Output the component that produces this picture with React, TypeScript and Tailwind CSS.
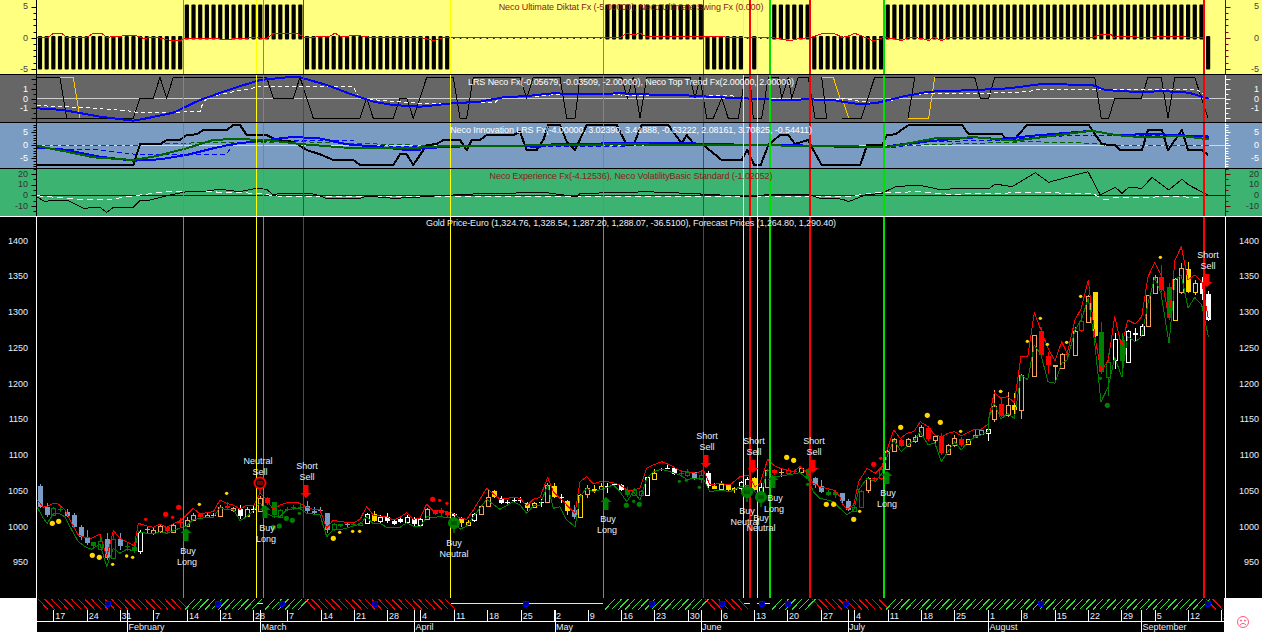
import type { ReactNode } from 'react';

type Pt = number[];
type Tick = { y: number; major: boolean };

// chart data was read off the picture in 3x crops, so every series keeps its crop offset
const P = (ox: number, oy: number, s: string): Pt[] =>
  s.trim().split(/\s+/).map((p) => {
    const [x, y] = p.split(',').map(Number);
    return [x / 3 + ox, y / 3 + oy];
  });
const line = (pts: Pt[]) => pts.map((p) => `${p[0].toFixed(1)},${p[1].toFixed(1)}`).join(' ');

const RED_LINE = [
  ...P(0, 420, '112,240 130,262 145,258 160,250 175,252 195,270 215,310 235,345 255,352 275,355 300,342 320,410 340,332 360,355 380,365 403,378 415,310 440,318 460,322 480,312 500,322 520,312 545,300 560,285 580,265 600,282 620,278 640,275 660,240 680,250 700,255 720,268 740,255 760,258 780,220 800,238 820,270 840,255 860,248 880,246 900,250 920,262 940,268 960,270 980,325 1000,300 1020,305 1060,308 1080,298 1100,260 1120,285 1140,288 1160,290 1180,300 1200,292 1220,278 1240,298'),
  ...P(420, 420, '0,295 20,252 40,272 60,270 100,280 120,295 140,298 160,270 200,205 240,238 280,232 300,235 320,258 340,238 360,232 383,172 400,215 420,235 440,255 465,280 480,185 500,170 520,192 545,183 580,188 600,195 620,210 640,210 660,205 680,145 700,135 725,125 750,135 780,152 800,155 830,160 850,150 870,195 900,190 930,195 960,170 985,165 1005,200 1020,190 1043,118 1060,135 1080,145 1100,150 1120,155 1140,140 1165,160 1180,190 1200,200 1240,210 1260,230'),
  ...P(842, 420, '0,250 15,268 35,255 50,185 75,145 100,160 120,140 135,90 155,30 175,55 195,40 215,35 235,5 258,20 278,45 298,50 318,40 338,35 358,48 378,38 398,28 418,28 438,12'),
  ...P(960, 220, '85,600 103,518 123,535 143,530 163,548 183,408 203,410 223,278 243,330 264,385 285,422 305,365 322,400 345,300 364,265 385,180 404,345 423,455 445,420 464,290 485,380 503,300 526,312 545,290 564,170 584,128 603,165 627,295 645,120 664,80 684,180 704,165 725,185 745,295'),
];

const GREEN_LINE = [
  ...P(0, 420, '112,262 130,295 142,310 160,282 175,280 195,290 215,330 235,365 255,380 275,388 300,372 320,440 340,385 360,400 380,388 403,392 415,335 440,340 460,342 480,335 500,340 520,332 545,322 560,318 580,298 600,296 620,292 640,292 660,262 680,270 700,268 720,302 740,290 760,272 780,248 800,280 820,290 840,290 860,270 880,266 900,265 920,280 940,282 960,285 980,350 1000,328 1020,330 1060,318 1080,312 1100,290 1120,312 1140,310 1160,322 1180,324 1200,322 1220,308 1240,318'),
  ...P(420, 420, '0,320 20,290 40,292 60,290 100,295 120,328 140,318 160,290 200,238 240,268 280,245 300,255 320,280 340,258 360,255 383,195 400,265 420,260 440,300 465,320 480,230 500,205 520,215 545,208 580,195 600,215 620,245 640,215 660,240 680,175 700,155 725,148 750,155 780,165 800,178 830,175 850,175 870,215 900,210 930,215 960,200 985,195 1005,215 1020,235 1043,148 1060,170 1080,168 1100,165 1120,162 1140,158 1165,178 1180,215 1200,235 1240,245 1260,265'),
  ...P(842, 420, '0,270 15,285 35,270 50,210 75,175 100,185 120,160 135,110 155,60 178,95 198,75 218,60 235,35 258,75 278,68 298,125 318,95 338,65 358,90 378,65 398,52 418,45 438,35'),
  ...P(960, 220, '85,600 103,550 123,597 143,580 163,595 183,465 203,480 223,375 243,405 264,485 285,490 305,430 322,420 345,330 364,300 385,235 404,370 423,545 445,500 464,412 485,470 503,350 526,365 545,350 564,250 584,172 603,220 627,370 645,180 664,165 684,265 704,232 725,255 745,350'),
];

const COLORS: Record<string, string> = {
  B: '#7b9cc4',
  G: '#008000',
  Y: '#ffd700',
  W: '#ffffff',
  O: '#f4a460',
  R: '#ff0000',
};

// x colour (f)illed|(h)ollow wickTop bodyTop bodyBottom wickBottom
const candleRows = (ox: number, oy: number, s: string) =>
  s.trim().split(';').filter(Boolean).map((row) => {
    const [x, c, kind, a, b, d, e] = row.trim().split(' ');
    return {
      x: +x / 3 + ox,
      color: COLORS[c],
      filled: kind === 'f',
      wt: +a / 3 + oy,
      bt: +b / 3 + oy,
      bb: +d / 3 + oy,
      wb: +e / 3 + oy,
    };
  });

const CANDLES = [
  ...candleRows(0, 420, `120 B f 192 198 260 265;142 B f 250 262 285 290;160 G h 262 265 285 288;180 G f 262 268 272 275;202 B f 268 275 288 290;222 B f 278 285 320 325;242 B f 315 322 352 360;261 B f 330 350 368 375;279 G f 365 366 378 385;300 G h 345 362 385 390;321 B f 340 358 416 420;340 G h 340 358 414 418;360 B f 340 358 378 390;382 G f 370 378 382 392;401 G f 375 382 393 400;421 W h 330 335 392 402;440 O f 318 328 331 342;459 O h 325 331 340 345;481 O h 315 319 334 338;501 R f 318 320 333 338;520 O h 312 314 334 337;540 R f 295 306 309 320;560 O h 290 300 317 320;580 O h 278 284 298 302;601 R f 280 282 292 296;620 O h 280 285 292 295;640 Y f 280 286 290 295;660 O h 255 262 290 292;680 R f 245 258 264 270;700 O h 260 264 270 275;720 W f 255 266 288 298;741 Y h 262 266 288 292;760 W f 258 268 271 278;781 O h 228 233 272 276;800 R f 232 234 248 255;822 G f 245 246 285 295;841 G h 268 270 290 295;862 G f 262 266 269 272;880 G f 255 262 265 270;901 G f 252 260 263 270;921 B f 243 258 272 280;942 B f 262 272 278 285;961 B f 262 270 273 280;981 B f 278 279 330 340;1002 G h 310 312 328 332;1021 G f 312 313 320 322;1042 B f 305 312 315 322;1060 G f 308 312 315 318;1080 G h 306 308 314 316;1102 W h 278 282 308 310;1122 Y f 272 282 302 305;1141 W h 285 290 303 308;1161 W f 280 292 305 310;1182 W f 296 302 312 316;1201 W f 295 298 306 310;1221 W h 285 290 305 310;1241 W f 290 296 312 318`),
  ...candleRows(420, 420, `1 W h 295 297 315 318;22 O h 265 268 298 300;44 R f 270 272 282 286;62 R f 265 273 280 290;82 R f 272 276 286 290;102 W f 278 282 288 300;123 Y f 292 295 310 322;143 Y h 300 305 315 318;161 W h 280 283 302 305;183 O h 255 258 283 286;203 O h 210 232 258 262;223 Y f 210 213 232 235;243 W f 228 233 248 252;262 W f 240 245 248 255;282 W f 232 240 243 250;301 W f 232 241 244 248;322 Y f 245 248 262 272;342 Y h 245 248 260 262;362 W f 238 247 250 260;382 O h 190 196 246 250;403 Y f 188 198 230 235;422 W f 222 232 235 248;442 Y f 240 243 273 285;462 B f 255 270 292 298;481 Y h 222 225 290 294;502 O h 195 205 222 235;522 Y f 195 207 214 218;542 Y h 190 198 208 210;562 W f 188 197 200 218;582 W f 188 192 195 198;602 W f 192 196 210 212;622 G f 200 210 226 232;642 G h 205 210 224 228;662 G h 210 214 225 230;682 W h 170 172 227 228;702 Y h 148 160 178 180;722 Y f 143 146 150 152;742 W f 132 143 146 148;763 W f 140 144 162 165;782 G f 150 158 161 170;802 G h 148 155 165 170;823 B f 155 157 178 180;843 G h 150 165 178 190;863 W f 152 158 198 205;883 Y f 190 197 206 208;904 Y h 182 193 208 212;925 Y f 192 193 210 212;943 Y h 200 203 206 220;962 W h 182 187 205 212;982 W h 172 177 200 212;1003 Y f 170 174 210 215;1022 W h 190 200 215 220;1042 O h 148 150 202 205;1063 R f 148 150 160 165;1083 O f 148 156 159 170;1103 R h 143 150 160 162;1122 R f 150 154 157 160;1142 O h 140 145 158 162;1165 G f 145 148 178 180;1184 B f 172 175 197 205;1204 B f 180 198 215 220;1224 G f 210 216 224 228;1244 G f 210 215 224 235`),
  ...candleRows(842, 420, `0 B f 218 220 245 250;18 B f 238 242 268 272;37 G h 255 260 272 275;57 G h 210 212 260 262;77 O h 172 175 212 218;97 R f 172 174 178 182;116 R h 145 148 176 180;136 O h 90 92 146 148;156 O h 55 58 95 97;178 R f 58 60 78 80;198 O h 55 58 78 80;218 O h 45 50 62 68;237 O h 15 22 50 52;259 R f 18 24 58 62;278 O h 45 48 60 75;298 R f 38 48 98 105;317 O h 72 76 102 105;336 O h 45 55 75 82;358 R f 52 56 74 80;378 Y h 58 58 72 75;398 B h 30 45 50 54;418 B h 28 30 42 46;438 W h 12 28 40 62`),
  ...candleRows(960, 220, `103 O h 510 558 598 605;123 R f 530 552 587 590;143 O h 515 555 584 590;162 Y f 520 556 570 590;183 O h 462 464 570 598;223 O h 345 346 470 472;243 R f 320 333 405 412;264 R f 395 408 435 462;285 O f 435 436 442 485;305 O h 400 403 444 446;322 R f 390 403 406 420;345 O h 320 332 404 408;364 R h 280 304 332 335;383 O h 225 228 307 310;404 Y f 215 216 348 350;423 G f 305 337 458 462;445 G h 400 425 470 528;464 W h 340 358 420 447;485 G f 340 360 422 470;503 W h 330 334 428 430;526 W f 325 340 345 365;545 W h 312 318 345 348;564 O h 225 226 318 320;584 O h 165 172 220 222;603 R f 135 172 210 215;627 G f 190 202 295 300;645 Y h 175 178 300 303;664 O h 130 145 218 222;684 Y f 125 148 218 220;704 Y h 180 190 216 225;725 W f 170 188 222 240;745 W f 214 222 300 302`),
];

const dots = (ox: number, oy: number, color: string, s: string) =>
  s.trim().split(/\s+/).map((p) => {
    const [x, y, r] = p.split(',').map(Number);
    return { x: x / 3 + ox, y: y / 3 + oy, r: r === 7 ? 2.6 : 1.7, color };
  });

const DOTS = [
  ...dots(0, 420, COLORS.Y, '157,310,7 176,304,7 277,406,7 298,412,7 338,433,4 380,408,4 398,412,4 598,253,4 680,220,4 1000,355,7 1019,337,4 1058,334,4 1079,334,4'),
  ...dots(0, 420, COLORS.R, '437,298,4 497,283,7 518,292,4 536,262,7'),
  ...dots(0, 420, COLORS.G, '820,322,7 838,318,7 859,295,7 877,301,7 898,280,4'),
  ...dots(420, 420, COLORS.R, '38,238,7 59,241,4 81,250,4'),
  ...dots(420, 420, COLORS.G, '619,256,7 641,244,4 658,253,7 778,184,4 799,181,4 838,202,4 1163,193,4'),
  ...dots(420, 420, COLORS.Y, '1100,112,7 1121,121,7 1219,253,7 1241,253,7'),
  ...dots(842, 420, COLORS.R, '95,133,7 116,115,4'),
  ...dots(842, 420, COLORS.Y, '35,298,7 53,274,4 176,22,7 295,7,7 356,34,4'),
  ...dots(880, 340, COLORS.Y, '142,226,7 362,154,4'),
  ...dots(960, 220, COLORS.Y, '122,514,4 202,364,4 241,295,4 262,373,4 320,367,4 362,229,4 601,112,4'),
  ...dots(960, 220, COLORS.G, '421,475,4 442,556,7'),
];

const MARKER_LINES = [
  { x: 183.5, c: '#00e000', w: 1 },
  { x: 256.5, c: '#ffff00', w: 1 },
  { x: 263.5, c: '#00e000', w: 1 },
  { x: 303.5, c: '#ff0000', w: 1 },
  { x: 450.5, c: '#ffff00', w: 1 },
  { x: 603.5, c: '#00e000', w: 1 },
  { x: 703.5, c: '#ff0000', w: 1 },
  { x: 743.5, c: '#ffff00', w: 1 },
  { x: 750, c: '#ff0000', w: 2 },
  { x: 757.5, c: '#ffff00', w: 1 },
  { x: 770, c: '#00e000', w: 2 },
  { x: 810, c: '#ff0000', w: 2 },
  { x: 884, c: '#00e000', w: 2 },
  { x: 1204, c: '#ff0000', w: 2 },
];

const SIGNAL_TEXT: [number, number, string][] = [
  [188, 551, 'Buy'], [187, 562, 'Long'],
  [258, 461, 'Neutral'], [260, 472, 'Sell'],
  [307, 466, 'Short'], [307, 477, 'Sell'],
  [267, 528, 'Buy'], [266, 539, 'Long'],
  [454, 543, 'Buy'], [454, 554, 'Neutral'],
  [608, 519, 'Buy'], [607, 530, 'Long'],
  [707, 436, 'Short'], [707, 447, 'Sell'],
  [754, 441, 'Short'], [754, 452, 'Sell'],
  [747, 511, 'Buy'], [745, 522, 'Neutral'],
  [761, 518, 'Buy'], [761, 528, 'Neutral'],
  [775, 498, 'Buy'], [774, 509, 'Long'],
  [814, 441, 'Short'], [814, 452, 'Sell'],
  [888, 493, 'Buy'], [887, 504, 'Long'],
  [1208, 255, 'Short'], [1208, 266, 'Sell'],
];

const UP_ARROWS: [number, number][] = [[186, 528], [265, 505], [606, 497], [773, 475], [887, 471]];
const DOWN_ARROWS: [number, number][] = [[306, 485], [706, 455], [753, 460], [813, 460], [1207, 274]];
const BUY_CIRCLES: [number, number][] = [[454, 523], [747, 492], [761, 497]];

const barState = (x: number) => {
  if (x < 183.5) return -1;
  if (x < 303) return 1;
  if (x < 450) return -1;
  if (x < 603.5) return 0;
  if (x < 703) return 1;
  if (x < 744) return -1;
  if (x > 749 && x < 756) return -1;
  if (x < 770) return 0;
  if (x < 810.5) return 1;
  if (x < 885) return -1;
  if (x < 1204) return 1;
  return -1;
};
const BAR_X = Array.from({ length: 176 }, (_, i) => 40 + 6.675 * i);

const HATCH: [number, number, string][] = [
  [37, 183, 'red'], [184, 256, 'green'], [257, 263, 'yellow'], [264, 303, 'green'],
  [304, 450, 'red'], [451, 603, 'yellow'], [604, 703, 'green'], [704, 743, 'red'],
  [744, 750, 'yellow'], [757, 770, 'yellow'], [771, 810, 'green'], [811, 884, 'red'],
  [885, 1204, 'green'], [1205, 1216, 'red'],
];
const BLUE_DOTS = [108, 218, 282, 375, 526, 652, 722, 762, 788, 846, 1041, 1208];

const DATES: [number, string][] = [
  [53.3, '17'], [86.7, '24'], [119.5, '31'], [153, '7'], [187, '14'], [220, '21'], [253, '28'],
  [287, '7'], [321, '14'], [354, '21'], [387, '28'], [420, '4'], [454, '11'], [487, '18'],
  [520.7, '25'], [554, '2'], [587.7, '9'], [621, '16'], [654, '23'], [687.7, '30'], [721, '6'],
  [754, '13'], [787, '20'], [821, '27'], [854, '4'], [887.7, '11'], [921, '18'], [954, '25'],
  [988, '1'], [1021, '8'], [1054.7, '15'], [1088, '22'], [1121, '29'], [1154.7, '5'], [1188, '12'],
  [1221, '19'],
];
const MONTHS: [number, string][] = [
  [127, 'February'], [260, 'March'], [414, 'April'], [554.5, 'May'], [700.5, 'June'],
  [847.5, 'July'], [988, 'August'], [1141, 'September'],
];

function makeTicks(zero: number, px: number, minor: number, major: number, min: number, max: number) {
  const out: Tick[] = [];
  for (let v = min; v <= max; v += minor) {
    out.push({ y: zero - v * px, major: v % major === 0 });
  }
  return out;
}

function Axis({ side, top, height, color, labelColor, ticks, labels }: {
  side: 'left' | 'right';
  top: number;
  height: number;
  color: string;
  labelColor: string;
  ticks: Tick[];
  labels: [string, number][];
}) {
  const left = side === 'left';
  const axisX = left ? 36.5 : 1225.5;
  const dir = left ? -1 : 1;
  return (
    <svg
      className="w-[37px] h-full shrink-0 block"
      viewBox={`${left ? 0 : 1225} ${top} 37 ${height}`}
    >
      <line x1={axisX} x2={axisX} y1={top} y2={top + height} stroke={color} />
      {ticks.map((t, i) => (
        <line
          key={i}
          x1={axisX}
          x2={axisX + dir * (t.major ? 5 : 3)}
          y1={Math.round(t.y) + 0.5}
          y2={Math.round(t.y) + 0.5}
          stroke={color}
        />
      ))}
      {labels.map(([text, y]) => (
        <text key={text} x={left ? 28 : 1259} y={y + 2.5} textAnchor="end" fill={labelColor}>
          {text}
        </text>
      ))}
    </svg>
  );
}

function MarkerLines({ top, height }: { top: number; height: number }) {
  return (
    <>
      {MARKER_LINES.map((m) => (
        <line key={m.x} x1={m.x} x2={m.x} y1={top} y2={top + height} stroke={m.c} strokeWidth={m.w} />
      ))}
    </>
  );
}

function Panel({ className, top, height, title, titleClass, axisColor, rightColor, labelColor, ticks, labels, children }: {
  className: string;
  top: number;
  height: number;
  title: string;
  titleClass: string;
  axisColor: string;
  rightColor: string;
  labelColor: string;
  ticks: Tick[];
  labels: [string, number][];
  children: ReactNode;
}) {
  return (
    <div className={`relative flex shrink-0 ${className}`}>
      <Axis side="left" top={top} height={height} color={axisColor} labelColor={labelColor} ticks={ticks} labels={labels} />
      <div className="relative w-[1188px] h-full">
        <svg className="block w-full h-full" viewBox={`37 ${top} 1188 ${height}`}>
          {children}
          <MarkerLines top={top} height={height} />
        </svg>
        <div className={`absolute left-0 right-0 top-0 text-center whitespace-nowrap leading-[14px] tracking-[-0.09px] ${titleClass}`}>{title}</div>
      </div>
      <Axis side="right" top={top} height={height} color={rightColor} labelColor={labelColor} ticks={ticks} labels={labels} />
    </div>
  );
}

const TOP_RED = [
  ...P(0, 0, '110,112 145,112 160,100 185,100 200,112 260,112 280,100 305,100 320,112 365,108 405,106 430,115 470,112 505,120 540,122 555,115 640,116 680,118 760,113 800,115 820,100 890,100 915,112 985,110 1005,100 1025,110 1070,106 1110,112 1260,112'),
  ...P(420, 0, '0,112 40,122 70,113 600,113 620,100 640,105 660,100 680,110 850,110 1060,113 1110,122 1140,115 1170,113 1210,100 1240,100 1260,108'),
  ...P(842, 0, '0,112 15,110 38,100 60,108 95,123 125,112 165,118 180,122 200,112 240,115 260,122 275,112 300,122 320,112 750,113 780,102 805,102 815,112 830,108 900,112 970,110 1090,112'),
];

const TREND = [
  ...P(0, 0, '110,232 180,232 200,355 400,355 420,295 460,295 480,232 500,295 520,232 800,232 820,295 880,295 900,232 940,355 1080,355 1100,295 1120,355 1180,355 1200,295 1220,295 1240,355 1260,295'),
  ...P(420, 0, '0,295 20,232 100,232 120,355 140,355 160,232 300,232 320,295 340,232 420,232 440,355 465,355 480,232 605,232 622,295 640,232 660,355 680,232 810,232 825,295 840,232 860,355 880,355 905,295 925,355 955,355 975,232 990,232 1000,355 1025,355 1045,232 1075,232 1085,295 1105,232 1115,295 1135,232 1165,232 1185,355 1220,355 1205,232 1215,232'),
];
const TREND_FLOOR = P(0, 0, '110,355 200,355');
const TREND_B = P(842, 0, '0,355 58,355 98,232 218,232 198,355');
const TREND_C = P(842, 0, '278,232 398,232 415,295 440,295 458,232 758,232 778,355 800,355 818,295 898,295 918,232 958,232 978,355 998,232 1058,232 1098,355');
const TREND_Y = [
  P(0, 0, '180,232 220,232 240,355'),
  P(420, 0, '1205,232 1240,232 1260,295'),
  P(842, 0, '0,295 20,355'),
  P(842, 0, '198,355 260,355 278,232'),
];
const LRS_BLUE = [
  ...P(0, 0, '110,325 190,330 300,350 400,362 440,355 520,338 600,300 700,265 780,240 860,232 900,232 980,255 1060,285 1120,305 1180,315 1260,320'),
  ...P(420, 0, '0,320 100,310 180,305 250,292 320,288 400,280 500,283 600,280 700,284 780,285 900,292 970,295 1080,300 1170,298 1260,302'),
  ...P(842, 0, '0,305 50,312 100,310 140,300 180,290 260,275 400,270 500,265 600,252 750,255 790,270 900,277 960,273 1040,278 1100,296'),
];
const LRS_WHITE = [
  ...P(0, 0, '110,315 140,318 240,322 380,332 420,338 600,335 610,305 630,290 700,275 770,262 790,258 1060,258 1075,290 1100,298 1200,305 1260,310'),
  ...P(420, 0, '0,310 225,308 240,292 360,288 440,280 600,285 940,288 960,295 1260,300'),
  ...P(842, 0, '0,295 60,305 120,308 160,298 190,288 260,280 430,280 560,275 580,268 760,268 790,270 1060,268 1075,275 1098,296'),
];

const INNO_BLACK = [
  ...P(0, 0, '110,495 400,495 420,433 480,433 500,420 540,420 560,405 590,403 610,390 680,390 700,375 720,375 740,405 800,405 830,420 880,425 920,450 960,463 1000,480 1060,480 1080,495 1180,495 1200,463 1220,463 1240,495 1260,465'),
  ...P(420, 0, '0,465 20,435 50,432 70,420 120,420 140,450 155,420 180,420 200,405 280,405 300,395 320,450 350,450 370,420 385,375 420,375 440,425 465,450 500,375 590,375 620,435 640,435 665,375 745,375 785,430 800,405 820,430 850,435 905,480 965,480 982,450 1003,495 1022,495 1045,435 1080,405 1105,405 1125,432 1165,420 1180,450 1205,495 1260,495'),
  ...P(842, 0, '0,495 55,495 75,435 120,435 135,405 160,403 200,375 360,375 380,403 480,403 490,415 520,415 555,375 740,375 780,433 820,435 835,450 900,450 918,390 960,390 978,450 1020,390 1038,450 1080,450 1098,465'),
];
const INNO_BLUE = [
  ...P(0, 0, '110,442 200,450 300,470 400,482 480,478 560,465 640,445 700,432 800,420 870,412 950,413 1040,433 1130,440 1220,450 1260,450'),
  ...P(420, 0, '0,445 100,440 200,437 360,440 400,432 600,430 800,430 900,432 1010,436 1130,436 1260,440'),
  ...P(842, 0, '0,442 130,440 200,430 300,420 400,412 480,418 560,408 660,400 750,392 820,405 940,402 1100,410'),
];
const INNO_GREEN = [
  ...P(0, 0, '110,438 200,455 280,472 400,480 470,468 560,445 640,420 700,417 800,420 900,432 1060,445 1260,445'),
  ...P(420, 0, '0,440 200,438 600,433 900,435 1260,438'),
  ...P(842, 0, '0,438 130,442 200,430 280,415 400,412 520,422 650,405 750,392 820,405 900,412 1020,408 1100,418'),
];
const INNO_BLUE_DASH = [
  ...P(0, 0, '110,445 300,450 400,462 680,463 700,430 870,420 1060,420 1075,436 1260,440'),
  ...P(420, 0, '0,440 1260,436'),
  ...P(842, 0, '0,440 160,442 260,425 500,420 600,410 750,405 1100,408'),
];
const INNO_GREEN_DASH = [
  ...P(0, 0, '110,438 400,436 500,430 900,425 1260,436'),
  ...P(420, 0, '0,436 1260,436'),
  ...P(842, 0, '0,438 100,440 300,433 560,425 760,430 790,436 1100,436'),
];

const EXP_BLACK = [
  ...P(0, 0, '110,590 135,605 160,600 200,600 250,625 300,622 320,637 340,622 400,622 420,602 450,600 500,587 560,575 620,573 660,568 720,575 770,565 800,568 820,585 840,580 930,580 960,587 980,597 1080,595 1100,588 1180,595 1260,592'),
  ...P(420, 0, '0,590 200,580 380,578 470,590 480,580 600,578 680,575 800,580 1000,590 1050,582 1170,585 1200,595 1260,597'),
  ...P(842, 0, '0,597 20,605 70,585 120,580 160,560 230,555 300,570 340,565 440,567 460,552 510,560 540,542 580,518 620,547 700,525 738,515 775,585 820,562 840,580 860,562 900,565 930,532 980,570 1020,538 1040,555 1098,585'),
];
const EXP_WHITE = [
  ...P(0, 0, '110,587 240,598 330,598 420,585 500,575 620,575 770,580 830,588 1000,590 1260,590'),
  ...P(420, 0, '0,588 1260,590'),
  ...P(842, 0, '0,592 100,578 240,575 320,583 540,578 750,580 790,600 820,592 900,592 980,590 1080,592'),
];

const Poly = ({ pts, color, width = 1, dash }: { pts: Pt[]; color: string; width?: number; dash?: string }) => (
  <polyline
    points={line(pts)}
    fill="none"
    stroke={color}
    strokeWidth={width}
    strokeDasharray={dash}
    strokeLinejoin="round"
    shapeRendering="crispEdges"
  />
);

function Candles() {
  return (
    <g shapeRendering="crispEdges">
      {CANDLES.map((c, i) => {
        const x = Math.round(c.x) + 0.5;
        return (
          <g key={i}>
            <line x1={x} x2={x} y1={c.wt} y2={c.wb} stroke={c.color} />
            {c.filled ? (
              <rect x={x - 2.5} y={Math.round(c.bt)} width={5} height={Math.max(Math.round(c.bb - c.bt), 1)} fill={c.color} />
            ) : (
              <rect x={x - 2} y={Math.round(c.bt) + 0.5} width={4} height={Math.max(Math.round(c.bb - c.bt), 1)} fill="#000000" stroke={c.color} />
            )}
          </g>
        );
      })}
    </g>
  );
}

function UpArrow({ x, y }: { x: number; y: number }) {
  return <polygon points={`${x},${y} ${x + 5.5},${y + 5} ${x + 2.5},${y + 5} ${x + 2.5},${y + 13} ${x - 2.5},${y + 13} ${x - 2.5},${y + 5} ${x - 5.5},${y + 5}`} fill="#008000" />;
}

function DownArrow({ x, y }: { x: number; y: number }) {
  return <polygon points={`${x - 2.5},${y} ${x + 2.5},${y} ${x + 2.5},${y + 8} ${x + 5.5},${y + 8} ${x},${y + 13} ${x - 5.5},${y + 8} ${x - 2.5},${y + 8}`} fill="#ff0000" />;
}

function NeutralMark({ x, y, color, ring }: { x: number; y: number; color: string; ring?: boolean }) {
  return (
    <g>
      <line x1={x} x2={x} y1={y} y2={y + 10} stroke={color} strokeWidth={1.5} />
      <circle cx={x} cy={y} r={5.5} fill={ring ? '#000000' : color} stroke={color} strokeWidth={ring ? 2 : 1} />
      <line x1={x - 3} x2={x + 3} y1={y - 1} y2={y - 1} stroke={ring ? color : '#003000'} />
      <line x1={x - 3} x2={x + 3} y1={y + 1} y2={y + 1} stroke={ring ? color : '#003000'} />
    </g>
  );
}

function PriceChart() {
  return (
    <svg className="block w-full h-full" viewBox="37 217 1188 381">
      <Candles />
      <Poly pts={RED_LINE} color="#ff0000" />
      <Poly pts={GREEN_LINE} color="#008000" />
      {DOTS.map((d, i) => (
        <circle key={i} cx={d.x} cy={d.y} r={d.r} fill={d.color} />
      ))}
      <MarkerLines top={217} height={381} />
      {UP_ARROWS.map(([x, y]) => <UpArrow key={x} x={x} y={y} />)}
      {DOWN_ARROWS.map(([x, y]) => <DownArrow key={x} x={x} y={y} />)}
      {BUY_CIRCLES.map(([x, y]) => <NeutralMark key={x} x={x} y={y} color="#008000" />)}
      <NeutralMark x={260} y={483} color="#ff0000" ring />
      {SIGNAL_TEXT.map(([x, y, t], i) => (
        <text key={i} x={x} y={y + 2.5} textAnchor="middle" fill="#e8f0ff">{t}</text>
      ))}
    </svg>
  );
}

function HatchStrip() {
  return (
    <svg className="block w-full h-[12px] shrink-0" viewBox="37 598 1187 12" shapeRendering="crispEdges">
      {HATCH.map(([from, to, kind]) => {
        if (kind === 'yellow') {
          return <line key={from} x1={from} x2={to} y1={603.5} y2={603.5} stroke="#ffff00" />;
        }
        const marks = [];
        for (let x = from; x < to - 3; x += 6.675) {
          marks.push(
            kind === 'red'
              ? <line key={x} x1={x + 1} x2={x + 11} y1={599} y2={609.5} stroke="#ff0000" />
              : <line key={x} x1={x + 1} x2={x + 11} y1={609.5} y2={599} stroke="#33e033" />,
          );
        }
        return <g key={from}>{marks}</g>;
      })}
      {BLUE_DOTS.map((x) => (
        <circle key={x} cx={x} cy={603.7} r={2.6} fill="#000080" stroke="#0000ff" strokeWidth={1.2} />
      ))}
    </svg>
  );
}

function TimeAxis() {
  return (
    <svg className="block w-full h-[22px] shrink-0" viewBox="37 610 1187 22">
      <line x1={37} x2={1224} y1={621.5} y2={621.5} stroke="#ffffff" />
      {DATES.map(([x, t]) => (
        <g key={x}>
          <line x1={Math.round(x) + 0.5} x2={Math.round(x) + 0.5} y1={610} y2={621} stroke="#ffffff" />
          <text x={x + 2} y={618.5} fill="#e8f0ff">{t}</text>
        </g>
      ))}
      {MONTHS.map(([x, t]) => (
        <g key={t}>
          <line x1={Math.round(x) + 0.5} x2={Math.round(x) + 0.5} y1={610} y2={632} stroke="#ffffff" />
          <text x={x + 1.5} y={630} fill="#e8f0ff">{t}</text>
        </g>
      ))}
    </svg>
  );
}

function FrownIcon() {
  return (
    <svg width="14" height="14" viewBox="0 0 14 14" fill="none" stroke="#ff5a78" strokeWidth="1">
      <circle cx="7" cy="7" r="5.5" />
      <circle cx="5" cy="5.5" r="0.6" fill="#ff5a78" />
      <circle cx="9" cy="5.5" r="0.6" fill="#ff5a78" />
      <path d="M4 10 Q7 6.8 10 10" />
    </svg>
  );
}

export default function App() {
  const mainTicks = makeTicks(527, 0.715, 10, 50, 900, 1430);
  const mainLabels: [string, number][] = [1400, 1350, 1300, 1250, 1200, 1150, 1100, 1050, 1000, 950].map((v) => [
    String(v),
    527 - (v - 1000) * 0.715,
  ]);

  return (
    <div className="w-[1262px] h-[632px] overflow-hidden flex flex-col bg-black text-[9px] font-['Liberation_Sans',sans-serif]">
      <Panel
        className="h-[75px] bg-[#ffff80] border-b border-black"
        top={0}
        height={74}
        title="Neco Ultimate Diktat Fx (-5.00000), Neco Ultimate Swing Fx (0.000)"
        titleClass="text-[#8b1a1a]"
        axisColor="#000000"
        rightColor="#800000"
        labelColor="#444444"
        ticks={makeTicks(37.7, 6.2, 1, 5, -5, 5)}
        labels={[['5', 6.7], ['0', 38], ['-5', 69]]}
      >
        {BAR_X.map((x) => {
          const s = barState(x);
          if (s === 1) return <rect key={x} x={x - 2.1} y={4.5} width={4.2} height={35} rx={1} fill="#000000" />;
          if (s === -1) return <rect key={x} x={x - 2.1} y={36} width={4.2} height={33.5} rx={1} fill="#000000" />;
          return <circle key={x} cx={x} cy={38} r={1} fill="#000000" />;
        })}
        <Poly pts={TOP_RED} color="#ff0000" />
      </Panel>
      <Panel
        className="h-[48px] bg-[#666666] border-b border-black"
        top={75}
        height={47}
        title="LRS Neco Fx(-0.05679, -0.03509, -2.00000), Neco Top Trend Fx(2.00000, 2.00000)"
        titleClass="text-white"
        axisColor="#000000"
        rightColor="#ffffff"
        labelColor="#ffffff"
        ticks={makeTicks(98.5, 9.8, 0.5, 1, -2, 2)}
        labels={[['1', 89], ['0', 99], ['-1', 108.5]]}
      >
        <line x1={37} x2={1225} y1={98.5} y2={98.5} stroke="#cfcfcf" />
        <Poly pts={TREND_FLOOR} color="#000000" />
        <Poly pts={TREND} color="#000000" />
        <Poly pts={TREND_B} color="#000000" />
        <Poly pts={TREND_C} color="#000000" />
        {TREND_Y.map((pts, i) => <Poly key={i} pts={pts} color="#ffc800" />)}
        <Poly pts={LRS_WHITE} color="#ffffff" dash="4 3" />
        <Poly pts={LRS_BLUE} color="#0000ff" width={2} />
      </Panel>
      <Panel
        className="h-[46px] bg-[#7b9cc2] border-b border-black"
        top={123}
        height={45}
        title="Neco Innovation LRS Fx(-4.00000, 3.02390, 3.41888, -0.63222, 2.08161, 3.70825, -0.54411)"
        titleClass="text-white"
        axisColor="#000000"
        rightColor="#ffffff"
        labelColor="#ffffff"
        ticks={makeTicks(145.3, 2.6, 1, 5, -8, 8)}
        labels={[['5', 132], ['0', 145], ['-5', 158]]}
      >
        <line x1={37} x2={1225} y1={145.5} y2={145.5} stroke="#d8d8d8" />
        <Poly pts={INNO_BLUE_DASH} color="#0000ff" dash="5 3" />
        <Poly pts={INNO_GREEN_DASH} color="#006400" dash="5 3" />
        <Poly pts={INNO_BLACK} color="#000000" width={2} />
        <Poly pts={INNO_BLUE} color="#0000ff" width={2} />
        <Poly pts={INNO_GREEN} color="#006400" width={2} />
      </Panel>
      <Panel
        className="h-[48px] bg-[#3cb371] border-b border-white"
        top={169}
        height={47}
        title="Neco Experience Fx(-4.12536), Neco VolatilityBasic Standard (-1.02052)"
        titleClass="text-[#8b1a1a]"
        axisColor="#000000"
        rightColor="#800000"
        labelColor="#333333"
        ticks={makeTicks(195.3, 1.06, 5, 10, -20, 25)}
        labels={[['20', 174], ['10', 184.5], ['0', 195], ['-10', 206]]}
      >
        <line x1={37} x2={1225} y1={195.5} y2={195.5} stroke="#0000c0" />
        <Poly pts={EXP_WHITE} color="#ffffff" dash="6 4" />
        <Poly pts={EXP_BLACK} color="#000000" />
      </Panel>

      <div className="relative flex h-[381px] shrink-0 bg-black">
        <Axis side="left" top={217} height={381} color="#ffffff" labelColor="#e8f0ff" ticks={mainTicks} labels={mainLabels} />
        <div className="relative w-[1188px] h-full">
          <PriceChart />
          <div className="absolute left-0 right-0 top-0 text-center whitespace-nowrap leading-[12px] tracking-[-0.09px] text-[#e8f0ff]">
            Gold Price-Euro (1,324.76, 1,328.54, 1,287.20, 1,288.07, -36.5100), Forecast Prices (1,264.80, 1,290.40)
          </div>
        </div>
        <Axis side="right" top={217} height={381} color="#ffffff" labelColor="#e8f0ff" ticks={mainTicks} labels={mainLabels} />
      </div>

      <div className="flex h-[34px] shrink-0">
        <div className="w-[37px] shrink-0 bg-white" />
        <div className="flex flex-col w-[1187px] shrink-0 bg-black overflow-hidden">
          <HatchStrip />
          <TimeAxis />
        </div>
        <div className="flex-1 bg-white flex items-end justify-center pb-[3px] pr-[1px]">
          <FrownIcon />
        </div>
      </div>
    </div>
  );
}
